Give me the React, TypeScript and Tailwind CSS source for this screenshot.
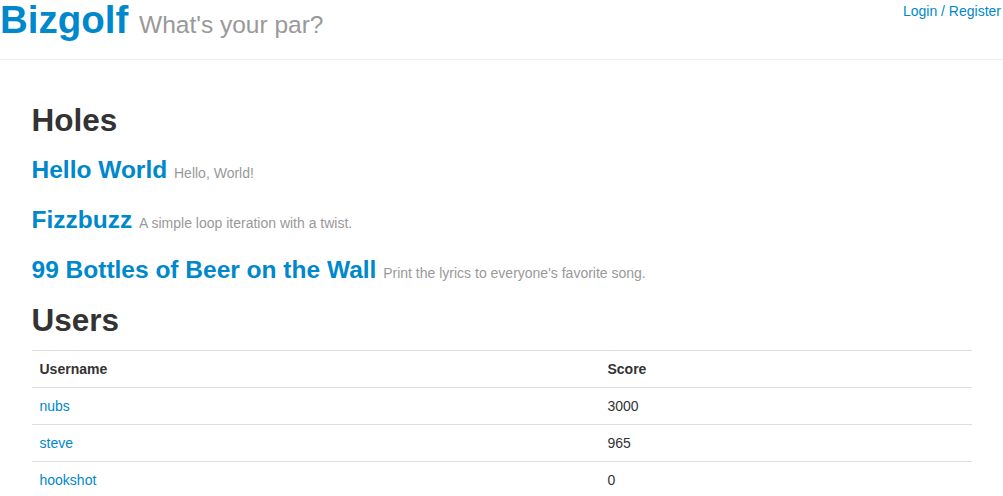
import React from 'react';

const holes = [
  { name: 'Hello World', desc: 'Hello, World!' },
  { name: 'Fizzbuzz', desc: 'A simple loop iteration with a twist.' },
  { name: '99 Bottles of Beer on the Wall', desc: "Print the lyrics to everyone's favorite song." },
];

const users = [
  { name: 'nubs', score: 3000 },
  { name: 'steve', score: 965 },
  { name: 'hookshot', score: 0 },
];

export default function App() {
  return (
    <div className="h-screen overflow-hidden bg-white font-['Liberation_Sans',Arial,sans-serif] text-[14px] leading-5 text-[#333]">
      <header className="flex h-[60px] items-start justify-between border-b border-[#eee]">
        <h1 className="m-0 text-[38.5px] font-bold leading-10 text-[#0088cc]">
          <a href="#">Bizgolf</a>{' '}
          <small className="text-[24.5px] font-normal leading-none text-[#999]">What's your par?</small>
        </h1>
        <div className="mt-px pr-[2px] text-[14px] leading-5 text-[#0088cc]">
          <a href="#">Login</a> / <a href="#">Register</a>
        </div>
      </header>

      <main className="mx-auto w-[940px] pt-[30px]">
        <h2 className="my-[10px] text-[31.5px] font-bold leading-10">Holes</h2>
        {holes.map((h) => (
          <h3 key={h.name} className="my-[10px] text-[24.5px] font-bold leading-10">
            <a href="#" className="text-[#0088cc]">{h.name}</a>{' '}
            <small className="text-[14px] font-normal leading-none text-[#999]">{h.desc}</small>
          </h3>
        ))}
        <h2 className="mt-[10px] mb-[10px] text-[31.5px] font-bold leading-10">Users</h2>
        <table className="w-[940px] border-collapse text-left">
          <thead>
            <tr>
              <th className="w-[568px] border-t border-[#ddd] p-2 font-bold">Username</th>
              <th className="border-t border-[#ddd] p-2 font-bold">Score</th>
            </tr>
          </thead>
          <tbody>
            {users.map((u) => (
              <tr key={u.name}>
                <td className="border-t border-[#ddd] p-2">
                  <a href="#" className="text-[#0088cc]">{u.name}</a>
                </td>
                <td className="border-t border-[#ddd] p-2">{u.score}</td>
              </tr>
            ))}
          </tbody>
        </table>
      </main>
    </div>
  );
}
